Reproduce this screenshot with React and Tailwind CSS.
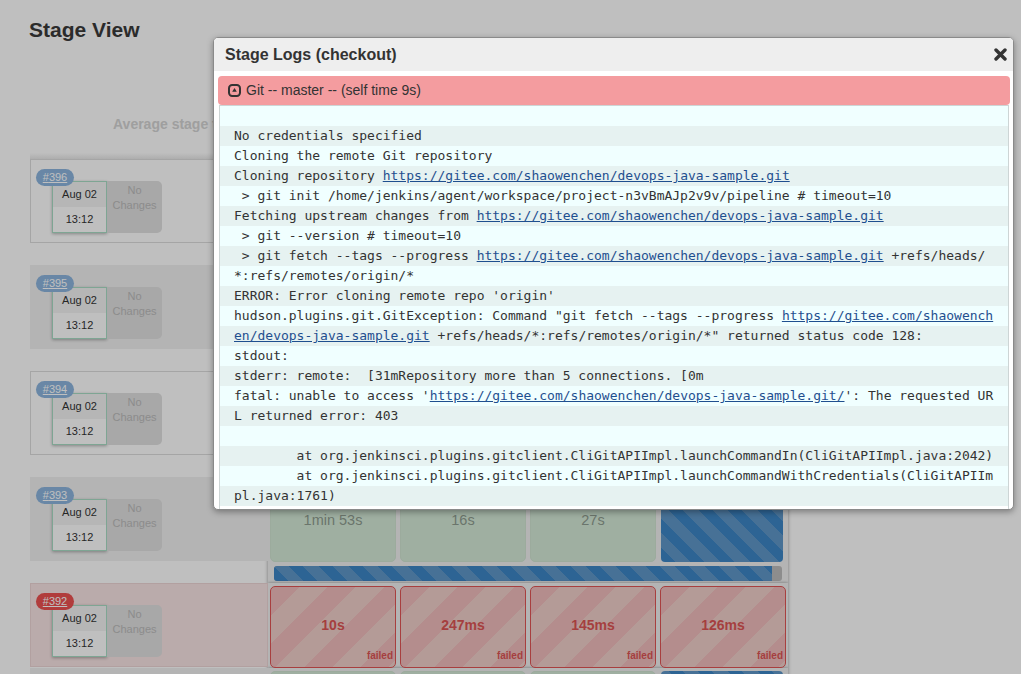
const repoUrl = "https://gitee.com/shaowenchen/devops-java-sample.git";

const link = (text) => ({ link: text });

const logLines = [
  [""],
  ["No credentials specified"],
  ["Cloning the remote Git repository"],
  ["Cloning repository ", link(repoUrl)],
  [" > git init /home/jenkins/agent/workspace/project-n3vBmAJp2v9v/pipeline # timeout=10"],
  ["Fetching upstream changes from ", link(repoUrl)],
  [" > git --version # timeout=10"],
  [" > git fetch --tags --progress ", link(repoUrl), " +refs/heads/"],
  ["*:refs/remotes/origin/*"],
  ["ERROR: Error cloning remote repo 'origin'"],
  ['hudson.plugins.git.GitException: Command "git fetch --tags --progress ', link("https://gitee.com/shaowench")],
  [link("en/devops-java-sample.git"), ' +refs/heads/*:refs/remotes/origin/*" returned status code 128:'],
  ["stdout: "],
  ["stderr: remote:  [31mRepository more than 5 connections. [0m"],
  ["fatal: unable to access '", link(repoUrl + "/"), "': The requested UR"],
  ["L returned error: 403"],
  [""],
  ["        at org.jenkinsci.plugins.gitclient.CliGitAPIImpl.launchCommandIn(CliGitAPIImpl.java:2042)"],
  ["        at org.jenkinsci.plugins.gitclient.CliGitAPIImpl.launchCommandWithCredentials(CliGitAPIIm"],
  ["pl.java:1761)"],
];

const builds = [
  { id: 396, times: ["1min 50s", "15s", "25s"] },
  { id: 395, times: ["1min 48s", "16s", "26s"] },
  { id: 394, times: ["1min 51s", "15s", "27s"] },
  { id: 393, times: ["1min 53s", "16s", "27s"] },
  { id: 392, failed: true, times: ["10s", "247ms", "145ms", "126ms"] },
  { id: 391, times: ["1min 52s", "16s", "26s"] },
];

function BuildInfo({ build, shaded }) {
  const rowBg = build.failed
    ? "bg-[#f8e4e4] border-[#eed6d6]"
    : shaded
      ? "bg-[#f1f1f1] border-[#f1f1f1]"
      : "bg-white border-[#dddddd]";
  const badgeBg = build.failed ? "bg-[#ec5050]" : "bg-[#8cb5de]";

  return (
    <div className={`relative h-[84px] w-[238px] shrink-0 border ${rowBg}`}>
      <a className={`absolute left-[5px] top-[9px] z-10 flex h-[17px] w-[38px] items-center justify-center rounded-full text-[11px] text-white underline ${badgeBg}`}>
        #{build.id}
      </a>
      <div className="ml-[21px] mt-[21px] flex h-[52px] w-[110px] text-[11px]">
        <div className="w-[55px] border border-[#a9dcc5] text-center text-[#333333] shadow-[0_1px_3px_rgba(0,0,0,0.3)]">
          <div className="flex h-[25px] items-center justify-center bg-[#f3f3f3] pb-[1px]">Aug 02</div>
          <div className="flex h-[25px] items-center justify-center bg-white pb-[1px]">13:12</div>
        </div>
        <div className="w-[55px] rounded-r-[5px] bg-[#e0e0e0] pt-[2px] text-center leading-[15px] text-[#bbbbbb]">
          No
          <br />
          Changes
        </div>
      </div>
    </div>
  );
}

function TimeCell({ time, failed }) {
  if (failed) {
    return (
      <div className="relative flex h-[82px] w-[126px] items-center justify-center rounded-[5px] border border-[#e05555] bg-[repeating-linear-gradient(135deg,#f0bcbc_0,#f0bcbc_20px,#f0cfca_20px,#f0cfca_40px)] pb-[3px] text-[14px] font-bold text-[#dd5555]">
        {time}
        <span className="absolute bottom-[5px] right-[2px] text-[10px] leading-[12px]">failed</span>
      </div>
    );
  }
  return (
    <div className="flex h-[82px] w-[126px] items-center justify-center rounded-[5px] border border-[#d0e4d2] bg-[#d5ead7] pb-[1px] text-[14.5px] text-[#8e9c90]">
      {time}
    </div>
  );
}

function StageCells({ build }) {
  return (
    <div className="flex h-[85px] gap-[4px] px-[2px] pt-[3px]">
      {build.times.map((t, i) => (
        <TimeCell key={i} time={t} failed={build.failed} />
      ))}
      {!build.failed && (
        <div className="ml-[1px] h-[82px] w-[122px] rounded-[4px] bg-[repeating-linear-gradient(45deg,#3d86c6_0,#3d86c6_10px,#5f97c8_10px,#5f97c8_21px)]" />
      )}
    </div>
  );
}

function BuildRow({ build, shaded }) {
  return (
    <div className="flex">
      <div className={build.failed ? "h-[85px]" : "h-[106px]"}>
        <BuildInfo build={build} shaded={shaded} />
      </div>
      <div className="w-[520px] bg-[#f1f1f1] shadow-[-1px_0_3px_rgba(0,0,0,0.2),1px_0_3px_rgba(0,0,0,0.2)]">
        <StageCells build={build} />
        {!build.failed && (
          <div className="h-[21px] px-[6px] pt-[4px]">
            <div className="flex h-[15px] overflow-hidden rounded-[3px] bg-[#bdbdbd]">
              <div className="w-[498px] bg-[repeating-linear-gradient(45deg,#3d86c6_0,#3d86c6_10px,#5f97c8_10px,#5f97c8_21px)]" />
            </div>
          </div>
        )}
      </div>
    </div>
  );
}

function LogModal() {
  return (
    <div className="absolute left-[213px] top-[37px] z-30 flex h-[473px] w-[801px] flex-col overflow-hidden rounded-[5px] border border-[#8a8a8a] bg-white shadow-[0_2px_6px_rgba(0,0,0,0.35)]">
      <div className="flex h-[33px] shrink-0 items-center justify-between bg-[#eeeeee] pl-[11px] pr-[6px]">
        <h2 className="text-[16px] font-bold text-[#333333]">Stage Logs (checkout)</h2>
        <svg width="13" height="13" viewBox="0 0 13 13" className="text-[#333333]">
          <path d="M2 2 L11 11 M11 2 L2 11" stroke="currentColor" strokeWidth="3.4" strokeLinecap="round" fill="none" />
        </svg>
      </div>
      <div className="flex min-h-0 flex-1 flex-col pl-[4px] pr-[3px] pt-[5px]">
        <div className="flex h-[29px] shrink-0 items-center gap-[5px] rounded-[4px] bg-[#f49c9f] pl-[10px] text-[14px] text-[#333333]">
          <svg width="13" height="13" viewBox="0 0 13 13">
            <rect x="1" y="1" width="11" height="11" rx="3.2" fill="none" stroke="#333333" strokeWidth="2" />
            <path d="M6.5 4 L8.8 7.8 L4.2 7.8 Z" fill="#333333" />
          </svg>
          <span>Git -- master -- (self time 9s)</span>
        </div>
        <div className="mx-[1px] min-h-0 flex-1 overflow-hidden border-x border-t border-[#cdd5d5] font-['DejaVu_Sans_Mono',monospace] text-[13px] leading-[20px] text-[#333333]">
          {logLines.map((segments, i) => (
            <div key={i} className={`h-[20px] whitespace-pre pl-[14px] ${i % 2 ? "bg-[#e6f2f1]" : "bg-[#f0ffff]"}`}>
              {segments.map((s, j) =>
                typeof s === "string" ? (
                  <span key={j}>{s}</span>
                ) : (
                  <a key={j} className="text-[#1f4f8f] underline">{s.link}</a>
                )
              )}
            </div>
          ))}
        </div>
      </div>
    </div>
  );
}

export default function App() {
  return (
    <div className="relative h-screen overflow-hidden bg-white font-['Liberation_Sans',Arial,sans-serif]">
      <main className="pl-[30px]">
        <h1 className="-ml-[1px] h-[110px] pt-[17px] text-[21px] font-bold leading-[26px] text-[#3a3a3a]">Stage View</h1>
        <div className="flex h-[49px] w-[238px] flex-col justify-between">
          <p className="pl-[83px] pt-[5px] text-[14px] font-bold leading-[18px] whitespace-nowrap text-[#d4d4d4]">Average stage times:</p>
          <div className="h-[6px] bg-gradient-to-b from-transparent to-[#e8e8e8]" />
        </div>
        {builds.map((b, i) => (
          <BuildRow key={b.id} build={b} shaded={i % 2 === 1} />
        ))}
      </main>
      <div className="absolute inset-0 z-20 bg-black/25" />
      <LogModal />
    </div>
  );
}
